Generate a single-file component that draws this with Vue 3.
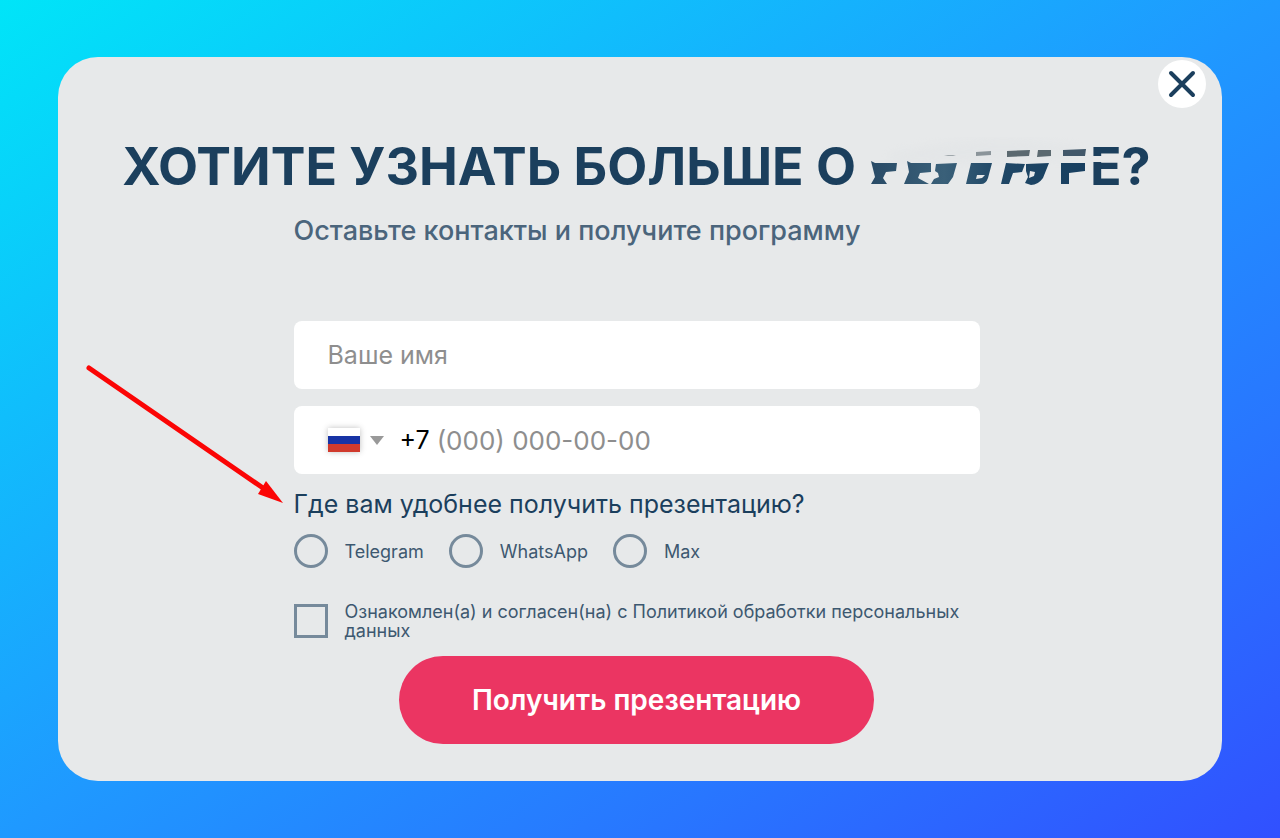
<template>
  <main class="page">
    <section class="modal" role="dialog" aria-labelledby="modal-title">
      <button class="modal-close" type="button" aria-label="Закрыть">
        <svg viewBox="0 0 48 48" fill="none">
          <path d="M13 13L35 35M35 13L13 35" stroke="#1b3f5d" stroke-width="4" stroke-linecap="round" />
        </svg>
      </button>

      <h1 id="modal-title" class="modal-title">
        <span>ХОТИТЕ УЗНАТЬ БОЛЬШЕ О</span>
        <svg class="title-smudge" viewBox="0 0 218 60" aria-hidden="true">
          <defs>
            <linearGradient id="smudge-tone" gradientUnits="userSpaceOnUse" x1="0" y1="0" x2="218" y2="0">
              <stop offset="0" stop-color="#284a66" />
              <stop offset="0.35" stop-color="#3a6079" />
              <stop offset="0.6" stop-color="#1f4766" />
              <stop offset="1" stop-color="#183f60" />
            </linearGradient>
            <filter id="smudge-haze" x="-20%" y="-60%" width="140%" height="220%">
              <feGaussianBlur stdDeviation="5" />
            </filter>
          </defs>
          <path d="M18 18Q80 0 150 2L210 8L206 22L28 28Z" fill="#dfe2e4" opacity="0.4" filter="url(#smudge-haze)" />
          <g fill="#5b6970">
            <path d="M76 19L80 18L88 18L85 19Z" opacity="0.5" />
            <path d="M108 15L123 14L123 18L108 19Z" opacity="0.65" />
            <path d="M139 14L162 13L161 19L139 20Z" />
            <path d="M170 13L183 13L183 19L169 20Z" />
            <path d="M195 13L218 12L217 19L195 19Z" fill="#42586a" />
          </g>
          <g fill="url(#smudge-tone)">
            <path d="M3 24L7 26L29 26L28 34L18 35L15 41L19 47L3 47L7 40Z" />
            <path d="M39 24L43 26L63 26L63 35L52 36L50 41L61 47L36 47L41 35Z" />
            <path d="M68 27L89 26L85 40L80 47L63 47L66 42L71 40L70 36L67 34Z" />
            <path fill-rule="evenodd" d="M103 26L124 26L120 41Q118 47 113 47L98 47ZM109 38L108 42L114 41L117 38Z" />
            <path d="M138 26L157 27L154 35L145 36L141 47L133 47Z" />
            <path fill-rule="evenodd" d="M158 27L181 26L175 41Q170 48 163 48L157 46L160 40L158 34ZM162 34L161 41L166 39L167 35Z" />
            <path d="M193 26L217 26L217 34L201 36L201 47L193 47Z" />
          </g>
        </svg>
        <span class="title-end">E?</span>
      </h1>
      <p class="modal-subtitle">Оставьте контакты и получите программу</p>

      <form class="form" @submit.prevent>
        <input v-model="name" class="field" type="text" name="name" placeholder="Ваше имя" aria-label="Ваше имя" />

        <div class="field phone">
          <button class="country" type="button" aria-label="Россия, выбрать страну">
            <svg class="flag" viewBox="0 0 32 24">
              <path fill="#fff" d="M0 0h32v8H0z" />
              <path fill="#1733a5" d="M0 8h32v8H0z" />
              <path fill="#d03a2c" d="M0 16h32v8H0z" />
            </svg>
            <svg class="caret" viewBox="0 0 14 9">
              <path fill="#999" d="M0 0h14L7 9z" />
            </svg>
          </button>
          <label class="phone-code" for="phone">+7</label>
          <input id="phone" v-model="phone" class="phone-input" type="tel" placeholder="(000) 000-00-00" />
        </div>

        <fieldset class="messengers">
          <legend class="question">Где вам удобнее получить презентацию?</legend>
          <div class="options">
            <label v-for="item in messengers" :key="item" class="option">
              <input v-model="messenger" class="mark mark-round" type="radio" name="messenger" :value="item" />
              <span>{{ item }}</span>
            </label>
          </div>
        </fieldset>

        <label class="consent">
          <input v-model="agreed" class="mark" type="checkbox" name="agreed" />
          <span>Ознакомлен(а) и согласен(на) с Политикой обработки персональных данных</span>
        </label>

        <button class="submit" type="submit">Получить презентацию</button>
      </form>

      <svg class="arrow" viewBox="0 0 200 142" aria-hidden="true">
        <path d="M4 4L178 124" stroke="#fb0505" stroke-width="5" stroke-linecap="round" />
        <path d="M181 117L198 139L173 130Z" fill="#fb0505" />
      </svg>
    </section>
  </main>
</template>

<script setup>
import { ref } from 'vue'

const messengers = ['Telegram', 'WhatsApp', 'Max']

const name = ref('')
const phone = ref('')
const messenger = ref('')
const agreed = ref(false)
</script>

<style>
body {
  margin: 0;
}
</style>

<style scoped>
.page {
  box-sizing: border-box;
  min-height: 100vh;
  padding: 57px 58px;
  background: linear-gradient(to bottom right, #00e5f8 0%, #10befc 25%, #1f99ff 50%, #2876ff 75%, #3150ff 100%);
  color: #1b3f5d;
  font-family: Inter, "Noto Sans", sans-serif;
}

.modal {
  position: relative;
  display: flex;
  flex-direction: column;
  align-items: center;
  padding: 80px 64px 37px 57px;
  border-radius: 40px;
  background: #e7e9ea;
}

.modal-close {
  position: absolute;
  top: 3px;
  right: 16px;
  width: 48px;
  height: 48px;
  padding: 0;
  border: 0;
  border-radius: 50%;
  background: #fff;
  cursor: pointer;
}

.modal-close svg {
  display: block;
}

.modal-title {
  display: flex;
  align-items: center;
  margin: 0;
  font-size: 52px;
  font-weight: 700;
  line-height: 60px;
  white-space: nowrap;
}

.title-smudge {
  width: 218px;
  height: 60px;
  margin: 0 4px 0 12px;
}

.title-end {
  position: relative;
}

/* the wiped band that crosses the last letter */
.title-end::before {
  content: "";
  position: absolute;
  top: 19px;
  left: 0;
  width: 30px;
  height: 6px;
  background: #e7e9ea;
}

.modal-subtitle {
  width: 100%;
  max-width: 686px;
  margin: 16px 0 0;
  color: #4b657c;
  font-size: 27px;
  font-weight: 500;
  line-height: 36px;
}

.form {
  display: flex;
  flex-direction: column;
  width: 100%;
  max-width: 686px;
  margin-top: 72px;
}

.field {
  box-sizing: border-box;
  width: 100%;
  height: 68px;
  padding: 0 34px;
  border: 0;
  border-radius: 8px;
  background: #fff;
  color: #000;
  font-family: inherit;
  font-size: 25px;
}

.field::placeholder,
.phone-input::placeholder {
  color: #8e8e8e;
  opacity: 1;
}

.phone {
  display: flex;
  align-items: center;
  margin-top: 17px;
}

.country {
  display: flex;
  align-items: center;
  gap: 10px;
  padding: 0;
  border: 0;
  background: none;
  cursor: pointer;
}

.flag {
  width: 32px;
  height: 24px;
  box-shadow: 0 0 6px rgba(0, 0, 0, 0.25);
}

.caret {
  width: 14px;
  height: 9px;
}

.phone-code {
  margin-left: 16px;
}

.phone-input {
  flex: 1;
  min-width: 0;
  margin-left: 7px;
  padding: 0;
  border: 0;
  background: none;
  font-family: inherit;
  font-size: 26px;
}

.messengers {
  min-width: 0;
  margin: 16px 0 0;
  padding: 0;
  border: 0;
}

.question {
  padding: 0;
  font-size: 25px;
  line-height: 28px;
}

.options {
  display: flex;
  gap: 25px;
  margin-top: 16px;
}

.option {
  display: flex;
  align-items: center;
  gap: 17px;
  color: #3d5870;
  font-size: 18px;
}

.mark {
  flex: none;
  box-sizing: border-box;
  width: 34px;
  height: 34px;
  margin: 0;
  border: 3px solid #768a9b;
  appearance: none;
  cursor: pointer;
}

.mark-round {
  border-radius: 50%;
}

.mark:checked {
  background: #768a9b;
}

.consent {
  display: flex;
  align-items: center;
  gap: 17px;
  margin-top: 34px;
  color: #3d5870;
  font-size: 18px;
  line-height: 19px;
}

.submit {
  align-self: center;
  width: 475px;
  max-width: 100%;
  height: 88px;
  margin-top: 16px;
  border: 0;
  border-radius: 44px;
  background: #eb3562;
  color: #fff;
  font-family: inherit;
  font-size: 28px;
  font-weight: 600;
  cursor: pointer;
}

.arrow {
  position: absolute;
  top: 307px;
  left: 27px;
  width: 200px;
  height: 142px;
  fill: none;
  pointer-events: none;
}
</style>
